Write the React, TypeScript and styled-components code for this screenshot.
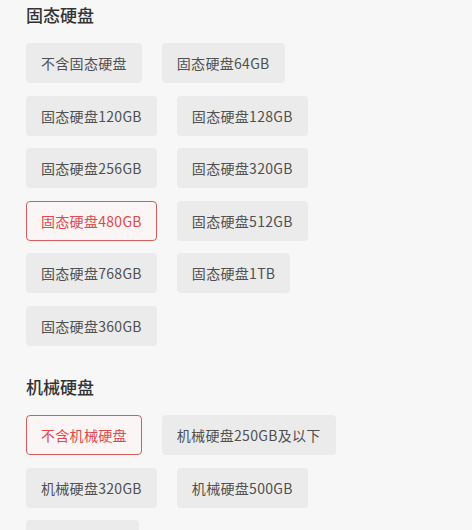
import React from "react";
import styled, { createGlobalStyle } from "styled-components";

const GlobalStyle = createGlobalStyle`
  html, body {
    margin: 0;
    padding: 0;
    background: #f7f7f7;
  }
  body {
    font-family: "Noto Sans CJK SC", "Noto Sans", sans-serif;
  }
`;

const Page = styled.div`
  width: 400px;
  padding: 2px 0 0 26px;
  height: 530px;
  overflow: hidden;
  box-sizing: border-box;
`;

const Section = styled.section`
  margin-bottom: 28px;
`;

const SectionTitle = styled.h3`
  margin: 0;
  height: 26px;
  line-height: 26px;
  font-size: 17px;
  font-weight: 500;
  color: #333;
`;

const Options = styled.div`
  display: flex;
  flex-wrap: wrap;
  gap: 12.6px 20px;
  margin-top: 15px;
`;

const Chip = styled.div<{ $active?: boolean }>`
  box-sizing: border-box;
  height: 40px;
  padding: 0 14px;
  display: flex;
  align-items: center;
  border-radius: 4px;
  font-size: 14px;
  letter-spacing: 0.3px;
  color: ${(p) => (p.$active ? "#e24848" : "#505050")};
  background: ${(p) => (p.$active ? "#fbf5f5" : "#ebebeb")};
  border: 1.5px solid ${(p) => (p.$active ? "#d95c5c" : "transparent")};
`;

const groups = [
  {
    title: "固态硬盘",
    items: [
      "不含固态硬盘",
      "固态硬盘64GB",
      "固态硬盘120GB",
      "固态硬盘128GB",
      "固态硬盘256GB",
      "固态硬盘320GB",
      "固态硬盘480GB",
      "固态硬盘512GB",
      "固态硬盘768GB",
      "固态硬盘1TB",
      "固态硬盘360GB",
    ],
    active: "固态硬盘480GB",
  },
  {
    title: "机械硬盘",
    items: [
      "不含机械硬盘",
      "机械硬盘250GB及以下",
      "机械硬盘320GB",
      "机械硬盘500GB",
      "机械硬盘1TB",
    ],
    active: "不含机械硬盘",
  },
];

export default function App() {
  return (
    <>
      <GlobalStyle />
      <Page>
        {groups.map((g) => (
          <Section key={g.title}>
            <SectionTitle>{g.title}</SectionTitle>
            <Options>
              {g.items.map((item) => (
                <Chip key={item} $active={item === g.active}>
                  {item}
                </Chip>
              ))}
            </Options>
          </Section>
        ))}
      </Page>
    </>
  );
}
